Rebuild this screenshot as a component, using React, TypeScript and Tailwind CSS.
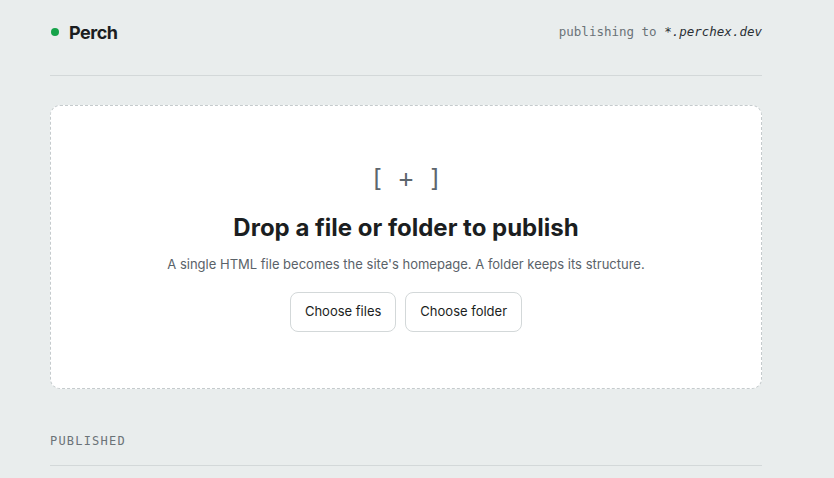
import React from "react";

export default function App() {
  const mono = { fontFamily: '"DejaVu Sans Mono", "Liberation Mono", monospace' };
  return (
    <div className="min-h-[478px] w-full bg-[#e9eded]" style={{ fontFamily: 'Inter, "Noto Sans", sans-serif' }}>
      <div className="ml-[50px] w-[712px]">
        <header className="flex items-center justify-between border-b border-[#d3d8d9] pt-[18px] pb-[29px]">
          <div className="flex h-[28px] items-center gap-[10px]">
            <span className="ml-[1px] h-[8px] w-[8px] rounded-full bg-[#16a34a]" />
            <span className="text-[18px] font-bold tracking-[-0.5px] text-[#1b1e21]">Perch</span>
          </div>
          <div className="text-[12.5px] text-[#6b7378]" style={mono}>
            publishing to <span className="italic text-[#2b3035]">*.perchex.dev</span>
          </div>
        </header>

        <section className="mt-[29px] flex h-[284px] flex-col items-center rounded-[10px] border border-dashed border-[#c5cbcd] bg-white pt-[59px]">
          <div className="h-[28px] text-[24px] leading-[28px] text-[#5d666d]" style={mono}>
            [ + ]
          </div>
          <h1 className="mt-[19px] text-[24px] font-bold leading-[32px] tracking-[0px] text-[#1b1e21]">
            Drop a file or folder to publish
          </h1>
          <p className="mt-[10px] text-[13px] leading-[20px] text-[#5a6269]">
            A single HTML file becomes the site's homepage. A folder keeps its structure.
          </p>
          <div className="mt-[18px] flex gap-[9px]">
            <button className="h-[40px] rounded-[8px] border border-[#d3d8d9] bg-white px-[14px] text-[13px] text-[#1b1e21]">
              Choose files
            </button>
            <button className="h-[40px] rounded-[8px] border border-[#d3d8d9] bg-white px-[14px] text-[13px] text-[#1b1e21]">
              Choose folder
            </button>
          </div>
        </section>

        <div className="mt-[44px] border-b border-[#d3d8d9] pb-[16px]">
          <div className="text-[12px] leading-[16px] tracking-[1.2px] text-[#6b7378]" style={mono}>
            PUBLISHED
          </div>
        </div>
      </div>
    </div>
  );
}
